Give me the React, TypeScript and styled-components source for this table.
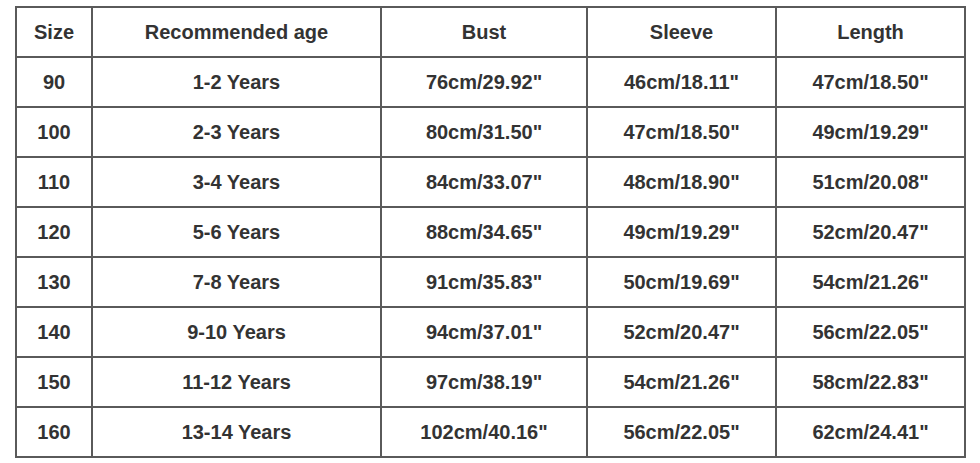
import { createGlobalStyle, styled } from "styled-components";

const GlobalStyle = createGlobalStyle`
  * {
    box-sizing: border-box;
  }
  body {
    margin: 0;
    background: #ffffff;
    font-family: "Liberation Sans", Arial, sans-serif;
  }
`;

const Page = styled.div`
  padding: 6px 0 0 15px;
`;

const Table = styled.table`
  border-collapse: collapse;
  width: 949px;
  table-layout: fixed;
`;

const Cell = styled.td<{ $w?: number }>`
  border: 2px solid #5a5a5a;
  height: 50px;
  padding: 0;
  text-align: center;
  vertical-align: middle;
  font-size: 20px;
  font-weight: bold;
  color: #333333;
  width: ${(p) => (p.$w ? `${p.$w}px` : "auto")};
`;

const headers = ["Size", "Recommended age", "Bust", "Sleeve", "Length"];
const widths = [76, 289, 206, 189, 189];

const rows = [
  ["90", "1-2 Years", "76cm/29.92\"", "46cm/18.11\"", "47cm/18.50\""],
  ["100", "2-3 Years", "80cm/31.50\"", "47cm/18.50\"", "49cm/19.29\""],
  ["110", "3-4 Years", "84cm/33.07\"", "48cm/18.90\"", "51cm/20.08\""],
  ["120", "5-6 Years", "88cm/34.65\"", "49cm/19.29\"", "52cm/20.47\""],
  ["130", "7-8 Years", "91cm/35.83\"", "50cm/19.69\"", "54cm/21.26\""],
  ["140", "9-10 Years", "94cm/37.01\"", "52cm/20.47\"", "56cm/22.05\""],
  ["150", "11-12 Years", "97cm/38.19\"", "54cm/21.26\"", "58cm/22.83\""],
  ["160", "13-14 Years", "102cm/40.16\"", "56cm/22.05\"", "62cm/24.41\""],
];

const App = () => {
  return (
    <>
      <GlobalStyle />
      <Page>
        <Table>
          <tbody>
            <tr>
              {headers.map((h, i) => (
                <Cell key={h} $w={widths[i]}>
                  {h}
                </Cell>
              ))}
            </tr>
            {rows.map((r) => (
              <tr key={r[0]}>
                {r.map((c, i) => (
                  <Cell key={i}>{c}</Cell>
                ))}
              </tr>
            ))}
          </tbody>
        </Table>
      </Page>
    </>
  );
};

export default App;
